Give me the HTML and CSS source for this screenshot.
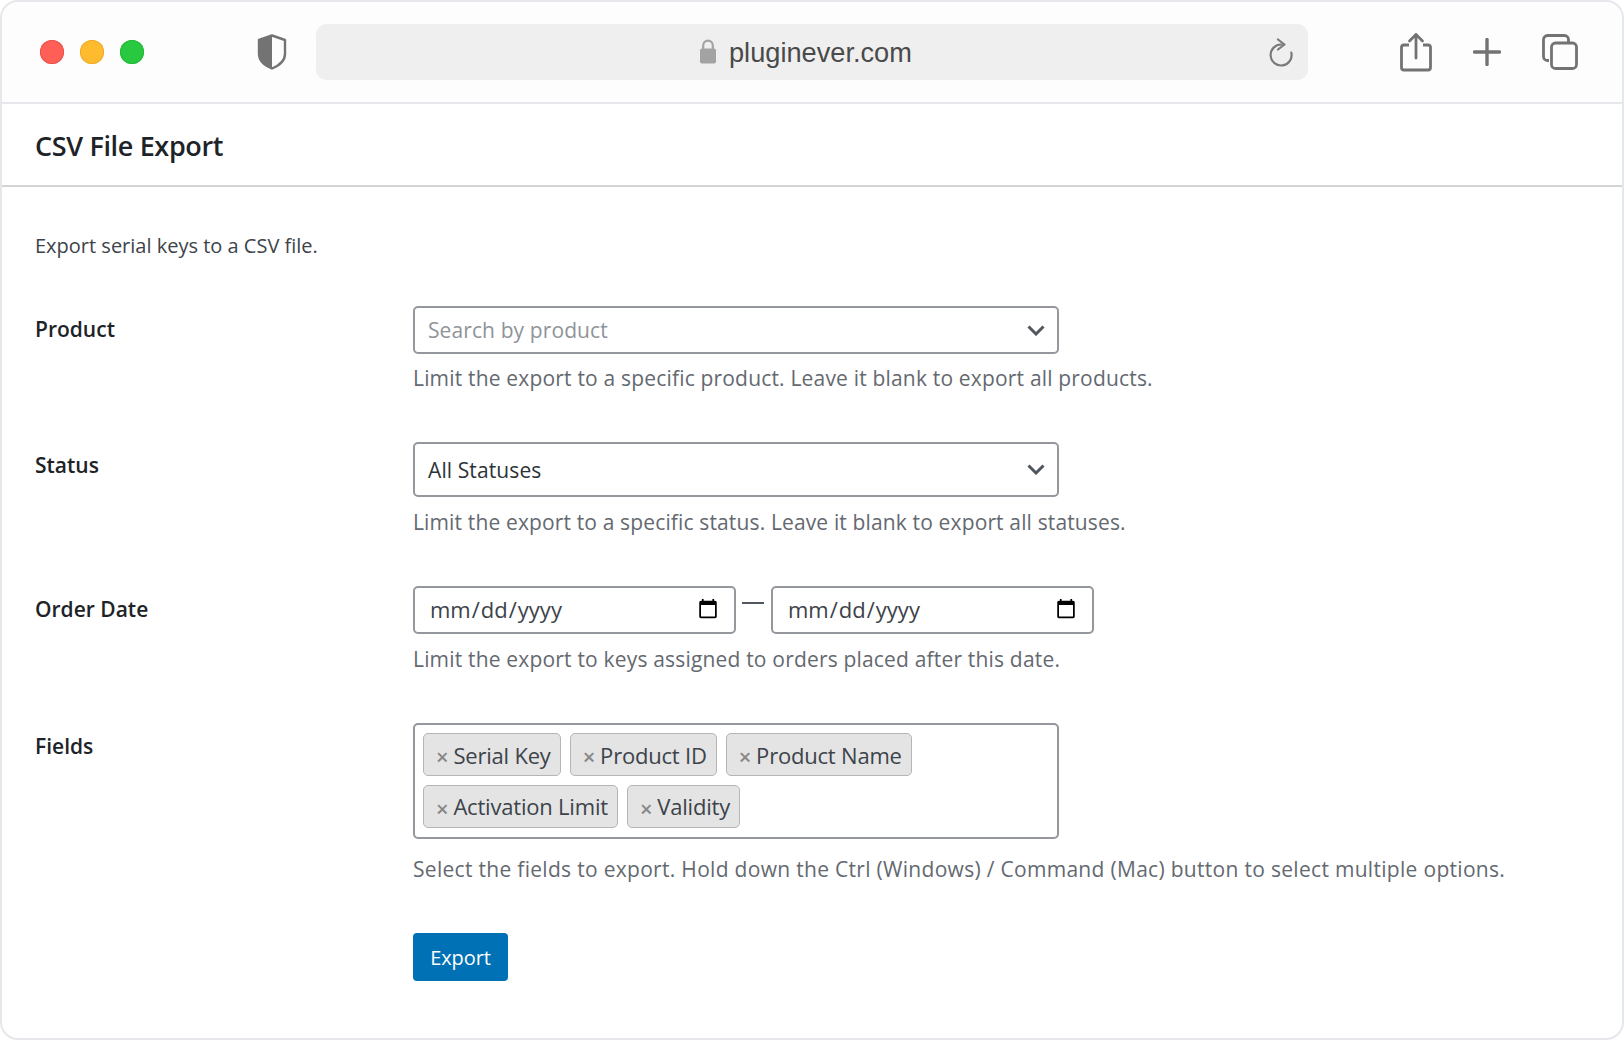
FILE: index.html
```html
<!DOCTYPE html>
<html lang="en">
<head>
<meta charset="utf-8">
<title>CSV File Export</title>
<link rel="stylesheet" href="styles.css">
</head>
<body>
<div class="window">
  <header class="toolbar">
    <div class="lights">
      <span class="light red"></span><span class="light yellow"></span><span class="light green"></span>
    </div>
    <svg class="shield" width="30" height="36" viewBox="0 0 30 36"><path d="M15 1.500 L28 6 V20 C28 27 21 32 15 34.500 C9 32 2 27 2 20 V6 Z" fill="none" stroke="#737373" stroke-width="2.400" stroke-linejoin="round"/><path d="M15 1.500 L2 6 V20 C2 27 9 32 15 34.500 Z" fill="#737373"/></svg>
    <div class="address">
      <svg class="lock" width="18" height="25" viewBox="0 0 18 25"><rect x="1" y="9.500" width="16" height="15" rx="2" fill="#a3a3a3"/><path d="M4.200 10V6.500a4.800 4.800 0 0 1 9.600 0V10" fill="none" stroke="#a3a3a3" stroke-width="2.200"/></svg>
      <span class="url">pluginever.com</span>
      <svg class="reload" width="26" height="30" viewBox="0 0 26 30"><path d="M13.500 6.500A10.500 10.500 0 1 0 23.300 14.500" fill="none" stroke="#7a7a7a" stroke-width="2.200" stroke-linecap="round"/><path d="M10 1.500 16.500 6.500 10 11.500" fill="none" stroke="#7a7a7a" stroke-width="2.200" stroke-linecap="round" stroke-linejoin="round"/></svg>
    </div>
    <div class="actions">
      <svg width="32" height="40" viewBox="0 0 32 40"><path d="M9 13H4a2.500 2.500 0 0 0-2.500 2.500v20A2.500 2.500 0 0 0 4 38h24a2.500 2.500 0 0 0 2.500-2.500v-20A2.500 2.500 0 0 0 28 13h-5" fill="none" stroke="#737373" stroke-width="2.800"/><path d="M16 26V2.500M9.500 9 16 2.500 22.500 9" fill="none" stroke="#737373" stroke-width="2.800" stroke-linecap="round" stroke-linejoin="round"/></svg>
      <svg width="28" height="28" viewBox="0 0 28 28"><path d="M14 1.500v25M1.500 14h25" fill="none" stroke="#737373" stroke-width="3.400" stroke-linecap="round"/></svg>
      <svg width="36" height="36" viewBox="0 0 36 36"><path d="M7 26.500H5.500a4 4 0 0 1-4-4V5.500a4 4 0 0 1 4-4h17a4 4 0 0 1 4 4V8" fill="none" stroke="#737373" stroke-width="2.800"/><rect x="9.500" y="9" width="25" height="25.500" rx="4" fill="none" stroke="#737373" stroke-width="2.800"/></svg>
    </div>
  </header>
  <h1 class="title">CSV File Export</h1>
  <main class="content">
    <p class="intro">Export serial keys to a CSV file.</p>
    <div class="row row-product">
      <label class="label">Product</label>
      <div class="field">
        <div class="select select-product"><span class="placeholder">Search by product</span><svg class="chev" width="18" height="11" viewBox="0 0 18 11"><path d="M1.500 1.500 9 9l7.500-7.500" fill="none" stroke="#50575e" stroke-width="3"/></svg></div>
        <p class="desc desc-product">Limit the export to a specific product. Leave it blank to export all products.</p>
      </div>
    </div>
    <div class="row row-status">
      <label class="label">Status</label>
      <div class="field">
        <div class="select select-status"><span>All Statuses</span><svg class="chev" width="18" height="11" viewBox="0 0 18 11"><path d="M1.500 1.500 9 9l7.500-7.500" fill="none" stroke="#50575e" stroke-width="3"/></svg></div>
        <p class="desc desc-status">Limit the export to a specific status. Leave it blank to export all statuses.</p>
      </div>
    </div>
    <div class="row row-date">
      <label class="label">Order Date</label>
      <div class="field">
        <div class="dates">
          <input class="date" type="date">
          <span class="dash"></span>
          <input class="date" type="date">
        </div>
        <p class="desc desc-date">Limit the export to keys assigned to orders placed after this date.</p>
      </div>
    </div>
    <div class="row row-fields">
      <label class="label">Fields</label>
      <div class="field">
        <div class="tags">
          <span class="tag"><i class="x">×</i>Serial Key</span>
          <span class="tag"><i class="x">×</i>Product ID</span>
          <span class="tag"><i class="x">×</i>Product Name</span>
          <span class="tag"><i class="x">×</i>Activation Limit</span>
          <span class="tag"><i class="x">×</i>Validity</span>
        </div>
        <p class="desc desc-fields">Select the fields to export. Hold down the Ctrl (Windows) / Command (Mac) button to select multiple options.</p>
        <button class="button" type="button">Export</button>
      </div>
    </div>
  </main>
</div>
</body>
</html>
```
FILE: styles.css
```css
* { box-sizing: border-box; }
html, body { margin: 0; padding: 0; }
body { width: 1624px; height: 1040px; background: #fff; overflow: hidden; font-family: "Open Sans", "Noto Sans", sans-serif; color: #3c434a; }
.window { width: 1624px; height: 1040px; border: 2px solid #e6e7eb; border-radius: 18px; background: #fff; overflow: hidden; }
.toolbar { height: 102px; background: #fdfdfd; border-bottom: 2px solid #e6e7eb; display: flex; align-items: center; }
.lights { display: flex; gap: 16px; margin-left: 38px; }
.light { width: 24px; height: 24px; border-radius: 50%; }
.red { background: #ff5f57; box-shadow: inset 0 0 0 1px #e5534b; }
.yellow { background: #ffbb2e; box-shadow: inset 0 0 0 1px #eeaa2a; }
.green { background: #28c840; box-shadow: inset 0 0 0 1px #24b838; }
.shield { margin-left: 113px; }
.address { width: 992px; height: 56px; margin-left: 29px; background: #efefef; border-radius: 10px; display: flex; align-items: center; padding-left: 383px; padding-right: 14px; }
.lock { margin-top: -2px; }
.url { margin: 2px 0 0 12px; font-family: "Liberation Sans", Arial, sans-serif; font-size: 27.200px; color: #4a4a4a; flex: 1; }
.reload { margin-top: 2px; }
.actions { display: flex; align-items: center; margin-left: 92px; gap: 41px; }
.title { margin: 0; height: 83px; border-bottom: 2px solid #d4d4d6; padding-left: 33px; font-size: 27px; line-height: 84px; font-weight: 600; color: #1d2327; letter-spacing: -0.350px; }
.content { padding: 0 0 0 33px; }
.intro { margin: 45px 0 0; font-size: 20px; line-height: 28px; color: #3c434a; }
.row { display: flex; }
.row-product { margin-top: 46px; }
.row-status { margin-top: 50px; }
.row-date { margin-top: 50px; }
.row-fields { margin-top: 50px; }
.label { width: 378px; flex: none; font-size: 21px; line-height: 28px; font-weight: 600; color: #1d2327; padding-top: 9px; }
.field { flex: 1; }
.select { width: 646px; border: 2px solid #94979c; border-radius: 5px; background: #fff; display: flex; align-items: center; justify-content: space-between; padding: 0 12px 0 13px; font-size: 21px; color: #2c3338; letter-spacing: 0.100px; }
.select-product { height: 48px; }
.select-status { height: 55px; }
.placeholder { color: #8f9499; }
.desc { margin: 10px 0 0; font-size: 21px; line-height: 28px; color: #646970; letter-spacing: 0.180px; white-space: nowrap; }
.desc-status { margin-top: 11px; letter-spacing: 0.140px; }
.desc-date { margin-top: 11px; }
.desc-fields { margin-top: 16px; letter-spacing: 0.300px; }
.dates { display: flex; align-items: flex-start; }
.date { width: 323px; height: 48px; border: 2px solid #94979c; border-radius: 5px; background: #fff; padding: 0 13px 2px 14px; font-family: inherit; font-size: 22px; color: #3c434a; margin: 0; }
.dash { width: 22px; height: 2px; background: #50575e; margin: 16px 7px 0 6px; flex: none; }
.tags { width: 646px; height: 116px; border: 2px solid #94979c; border-radius: 5px; background: #fff; padding: 8px; display: flex; flex-wrap: wrap; align-content: flex-start; gap: 8.500px 9px; }
.tag { height: 43px; display: flex; align-items: center; padding: 0 9px 0 12px; background: #e4e4e4; border: 1.500px solid #b5b5b5; border-radius: 5px; font-size: 22px; color: #3c434a; letter-spacing: -0.200px; }
.x { font-style: normal; font-weight: 600; color: #888; margin: 3px 5px 0 0; font-size: 22px; }
.button { display: block; margin-top: 50px; width: 95px; height: 48px; background: #0071b5; border: 0; border-radius: 4px; color: #fff; font-family: inherit; font-size: 20px; letter-spacing: -0.100px; padding: 0; }
```
